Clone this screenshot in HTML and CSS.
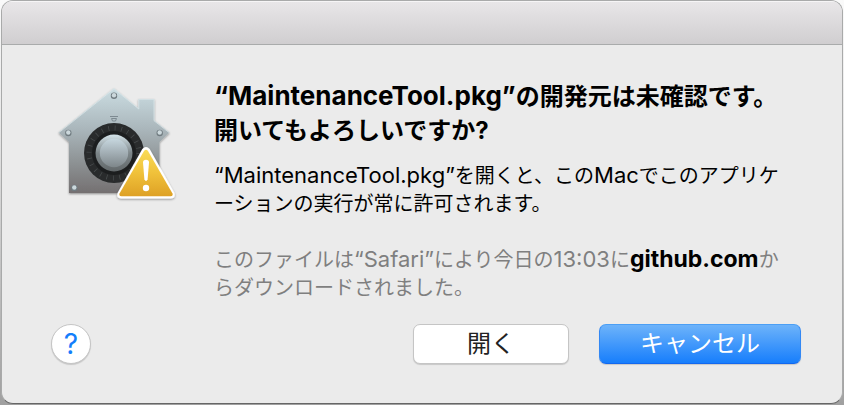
FILE: index.html
```
<!DOCTYPE html>
<html lang="ja">
<head>
<meta charset="utf-8">
<title>MaintenanceTool.pkg</title>
<link rel="stylesheet" href="styles.css">
</head>
<body>
<main class="dialog">
  <header class="titlebar"></header>
  <div class="content">
    <svg class="icon" viewBox="0 0 135 125" aria-hidden="true">
      <defs>
        <linearGradient id="house" x1="0" y1="0" x2="0" y2="1">
          <stop offset="0" stop-color="#cbdde2"/>
          <stop offset=".4" stop-color="#a9b5ba"/>
          <stop offset=".7" stop-color="#8e9395"/>
          <stop offset="1" stop-color="#747071"/>
        </linearGradient>
        <linearGradient id="knob" x1="0" y1="0" x2="0" y2="1">
          <stop offset="0" stop-color="#c6d6de"/>
          <stop offset="1" stop-color="#7e868a"/>
        </linearGradient>
        <linearGradient id="rim" x1="0" y1="0" x2="0" y2="1">
          <stop offset="0" stop-color="#d5e4ea"/>
          <stop offset=".5" stop-color="#7d8689"/>
          <stop offset="1" stop-color="#62686a"/>
        </linearGradient>
        <linearGradient id="warn" x1="0" y1="0" x2="0" y2="1">
          <stop offset="0" stop-color="#f9dc55"/>
          <stop offset=".5" stop-color="#f0c13a"/>
          <stop offset="1" stop-color="#dea125"/>
        </linearGradient>
        <filter id="shade" x="-20%" y="-20%" width="140%" height="140%">
          <feDropShadow dx="0" dy="1" stdDeviation="1" flood-opacity=".4"/>
        </filter>
      </defs>
      <path d="M64 8.300 88.500 28.500V19H104.300V40.500L119.500 52.500 109.500 62V113H19V62L8.500 52.500Z" fill="url(#house)" filter="url(#shade)"/>
      <path d="M9 52.500 64 8.800 88.800 29V19.400H104V40.700L119 52.500" fill="none" stroke="#dceaed" stroke-width=".7"/>
      <path d="M60 36.500h8M61.500 38.500l1 2.500h3l1-2.500Z" fill="none" stroke="#7d8a91" stroke-width="1"/>
      <g fill="#707b80">
        <circle cx="64" cy="15.800" r="3.200"/>
        <circle cx="18.300" cy="53" r="3.200"/>
        <circle cx="109.700" cy="53" r="3.200"/>
        <circle cx="24.300" cy="108" r="3.200"/>
      </g>
      <g fill="#ccd8dc">
        <circle cx="64" cy="15.300" r="2.200"/>
        <circle cx="18.300" cy="52.500" r="2.200"/>
        <circle cx="109.700" cy="52.500" r="2.200"/>
        <circle cx="24.300" cy="107.500" r="2.200"/>
      </g>
      <circle cx="64" cy="73" r="30" fill="#292b2c"/>
      <circle cx="64" cy="73" r="25" fill="none" stroke="#474b4c" stroke-width="5" stroke-dasharray=".8 5.745"/>
      <circle cx="64" cy="73" r="22" fill="#1c1e1f"/>
      <circle cx="64" cy="73" r="18.500" fill="url(#rim)"/>
      <circle cx="64" cy="73" r="14.200" fill="url(#knob)"/>
      <path d="M92.300 69Q96 65 99.700 69L124.500 113Q126 118 121 118.500H71Q66 118 67.500 113Z" fill="#fff" filter="url(#shade)"/>
      <path d="M94 71Q96 68.500 98 71L122.500 113.500Q123.300 116.300 120.500 116.300H71.500Q68.700 116.300 69.500 113.500Z" fill="url(#warn)"/>
      <path d="M93 82.500Q93 79.700 96 79.700T99 82.500L97.600 99.500Q96 102.300 94.400 99.500Z" fill="#fff"/>
      <circle cx="96" cy="108" r="3.200" fill="#fff"/>
    </svg>
    <div class="message">
      <h1 class="title"><span class="latin">“MaintenanceTool.pkg”</span>の開発元は未確認です。<br>開いてもよろしいですか?</h1>
      <p class="text"><span class="latin">“MaintenanceTool.pkg”</span>を開くと、この<span class="latin">Mac</span>でこのアプリケ<br>ーションの実行が常に許可されます。</p>
      <p class="text source">このファイルは<span class="latin">“Safari”</span>により今日の<span class="latin">13:03</span>に<strong class="latin">github.com</strong>か<br>らダウンロードされました。</p>
    </div>
  </div>
  <footer class="actions">
    <button class="help" type="button">?</button>
    <button class="button open" type="button">開く</button>
    <button class="button cancel" type="button">キャンセル</button>
  </footer>
</main>
</body>
</html>
```
FILE: styles.css
```
* {
  box-sizing: border-box;
}

body {
  margin: 0;
  padding: 0 1px 1px;
  background: linear-gradient(#fafafa, #e8e8e8 30%, #a0a0a0);
  font-family: Inter, "Noto Sans CJK JP", sans-serif;
  color: #000;
}

.dialog {
  display: flex;
  flex-direction: column;
  min-height: calc(100vh - 1px);
  border: 1px solid #a9aaaa;
  border-bottom-color: #666;
  border-radius: 12px;
  background: #ebebeb;
  overflow: hidden;
}

.titlebar {
  height: 44px;
  border-top: 1px solid #f6f5f6;
  border-bottom: 1px solid #a9abab;
  background: linear-gradient(#e8e6e8, #d0ced0);
}

.content {
  display: flex;
  align-items: flex-start;
  gap: 29px;
  padding: 35px 48px 0;
}

.icon {
  flex: none;
  width: 135px;
  height: 125px;
}

.message {
  flex: 1;
  white-space: nowrap;
}

.title {
  margin: 0;
  font-size: 24px;
  line-height: 34px;
  font-weight: 700;
}

.text {
  margin: 14px 0 0;
  font-size: 20px;
  line-height: 28px;
}

.text.source {
  margin-top: 28px;
  color: #7f7f7f;
}

.title .latin {
  font-size: 26px;
  line-height: 1;
}

.text .latin {
  font-size: 22px;
  line-height: 1;
}

.source strong.latin {
  color: #000;
  font-size: 23px;
}

.actions {
  display: flex;
  align-items: center;
  margin-top: auto;
  padding: 0 41px 39px 49px;
}

.help,
.button {
  height: 40px;
  padding: 0;
  border: 1px solid #c5c5c5;
  background: #fff;
  font-family: inherit;
  font-size: 24px;
  line-height: 36px;
  box-shadow: 0 1px 1px rgba(0, 0, 0, 0.15);
}

.help {
  width: 40px;
  margin-right: auto;
  border-radius: 50%;
  color: #147efb;
  font-size: 28px;
}

.button {
  border-radius: 7px;
  color: #222;
}

.open {
  width: 156px;
}

.cancel {
  width: 202px;
  margin-left: 30px;
  border-color: #4b9ff5 #3388f4 #1268ef;
  background: linear-gradient(#6db3fa, #177efc);
  color: #fff;
}
```
